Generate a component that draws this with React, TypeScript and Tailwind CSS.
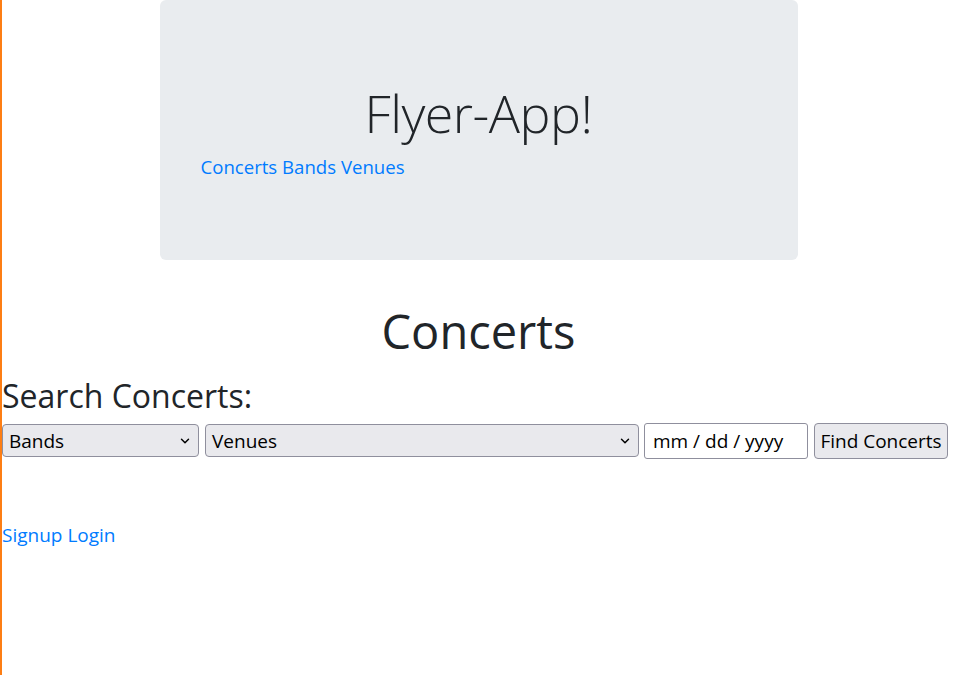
import { ChevronDown } from "lucide-react";

const font = { fontFamily: '"Open Sans", "Noto Sans", sans-serif' };

function FakeSelect({ label, width }: { label: string; width: string }) {
    return (
        <div className={`relative h-[33px] ${width} rounded-[4px] border border-[#8f8f9d] bg-[#e9e9ed] text-[19px] text-black flex items-center pl-[6px]`}>
            <span>{label}</span>
            <ChevronDown className="absolute right-[6px] top-[9px] h-[14px] w-[14px]" strokeWidth={2.5} />
        </div>
    );
}

export default function App() {
    return (
        <div className="min-h-screen border-l-2 border-[#fd7e14] bg-white text-[#212529]" style={font}>
            {/* Jumbotron */}
            <div className="mx-auto w-[638px] h-[260px] rounded-[6px] bg-[#e9ecef] pt-[82px] pl-[41px]">
                <h1 className="text-center text-[52px] leading-[1.2] font-light -ml-[41px] tracking-[-0.5px]">Flyer-App!</h1>
                <p className="mt-[9px] text-[18.6px] text-[#007bff]">
                    <a href="#">Concerts</a> <a href="#">Bands</a> <a href="#">Venues</a>
                </p>
            </div>

            {/* Concerts */}
            <h1 className="mt-[43px] text-center text-[47px] leading-[1.2]">Concerts</h1>
            <h2 className="text-[32px] leading-[1.2] mt-[18px]">Search Concerts:</h2>

            <form className="mt-[7px] flex items-center">
                <FakeSelect label="Bands" width="w-[197px]" />
                <div className="ml-[6px]">
                    <FakeSelect label="Venues" width="w-[434px]" />
                </div>
                <div className="ml-[5px] h-[36px] w-[164px] rounded-[3px] border border-[#8f8f9d] bg-white text-[19px] text-black flex items-center pl-[8px]">
                    mm / dd / yyyy
                </div>
                <button type="button" className="ml-[6px] h-[36px] w-[134px] rounded-[4px] border border-[#8f8f9d] bg-[#e9e9ed] text-[19px] text-black">
                    Find Concerts
                </button>
            </form>

            <p className="mt-[62px] text-[19px] text-[#007bff]">
                <a href="#">Signup</a> <a href="#">Login</a>
            </p>
        </div>
    );
}
